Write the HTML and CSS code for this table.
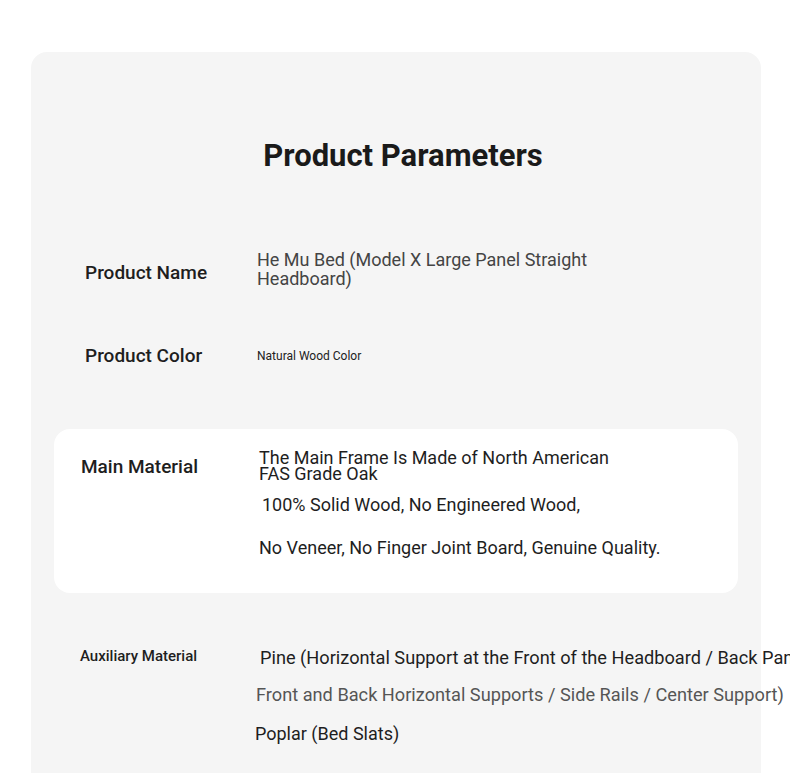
FILE: index.html
```html
<!DOCTYPE html>
<html lang="en">
<head>
<meta charset="utf-8">
<title>Product Parameters</title>
<link rel="stylesheet" href="styles.css">
</head>
<body>
<div class="page">
  <section class="card">
    <h1 class="title">Product Parameters</h1>

    <div class="row row-name">
      <div class="label">Product Name</div>
      <div class="value value-name">He Mu Bed (Model X Large Panel Straight Headboard)</div>
    </div>

    <div class="row row-color">
      <div class="label">Product Color</div>
      <div class="value value-small">Natural Wood Color</div>
    </div>

    <div class="row row-main">
      <div class="label label-main">Main Material</div>
      <div class="value-list">
        <p class="v v-frame">The Main Frame Is Made of North American<br>FAS Grade Oak</p>
        <p class="v v-solid">100% Solid Wood, No Engineered Wood,</p>
        <p class="v v-veneer">No Veneer, No Finger Joint Board, Genuine Quality.</p>
      </div>
    </div>

    <div class="row row-aux">
      <div class="label label-aux">Auxiliary Material</div>
      <div class="value-list value-list-aux">
        <p class="v v-pine">Pine (Horizontal Support at the Front of the Headboard / Back Panel</p>
        <p class="v v-front">Front and Back Horizontal Supports / Side Rails / Center Support)</p>
        <p class="v v-poplar">Poplar (Bed Slats)</p>
      </div>
    </div>
  </section>
</div>
</body>
</html>
```

FILE: styles.css
```css
html {
  overflow: hidden;
}
body {
  margin: 0;
  background: #ffffff;
  font-family: Roboto, "Liberation Sans", Arial, sans-serif;
  color: #1c1c1c;
}
.page {
  padding: 52px 29px 0 31px;
}
.card {
  width: 730px;
  background: #f5f5f5;
  border-radius: 16px;
  padding: 86px 0 80px;
  box-sizing: border-box;
}
.title {
  margin: 0;
  text-align: center;
  font-size: 31px;
  line-height: 36px;
  font-weight: 700;
  color: #1a1a1a;
  padding-left: 14px;
}
.row {
  display: flex;
  align-items: flex-start;
}
.label {
  font-size: 19px;
  line-height: 22px;
  font-weight: 500;
  color: #1e1e1e;
  width: 172px;
  padding-left: 54px;
  flex: none;
}
.value {
  font-size: 18px;
  line-height: 19px;
  color: #444444;
}
.row-name {
  margin-top: 76px;
}
.row-name .label {
  padding-top: 12px;
}
.value-name {
  width: 370px;
}
.row-color {
  margin-top: 57px;
}
.value-small {
  font-size: 12px;
  line-height: 14px;
  color: #222222;
  padding-top: 4px;
}
.row-main {
  margin: 62px 23px 0;
  background: #ffffff;
  border-radius: 16px;
  height: 164px;
  box-sizing: border-box;
  padding-top: 21px;
}
.label-main {
  padding-left: 27px;
  width: 178px;
  padding-top: 6px;
}
.value-list {
  display: flex;
  flex-direction: column;
  white-space: nowrap;
}
.v {
  margin: 0;
  font-size: 18px;
  color: #1e1e1e;
}
.v-frame {
  line-height: 16px;
}
.v-solid {
  line-height: 20px;
  margin-top: 13px;
  padding-left: 3px;
}
.v-veneer {
  line-height: 20px;
  margin-top: 23px;
}
.row-aux {
  margin-top: 54px;
}
.label-aux {
  font-size: 15px;
  line-height: 18px;
  padding-left: 49px;
  width: 175px;
  font-weight: 500;
}
.value-list-aux {
  padding-top: 1px;
}
.v-pine {
  font-size: 18.2px;
  line-height: 20px;
  padding-left: 5px;
}
.v-front {
  font-size: 18.2px;
  line-height: 20px;
  margin-top: 17px;
  padding-left: 1px;
  color: #555555;
}
.v-poplar {
  line-height: 20px;
  margin-top: 19px;
}
```
